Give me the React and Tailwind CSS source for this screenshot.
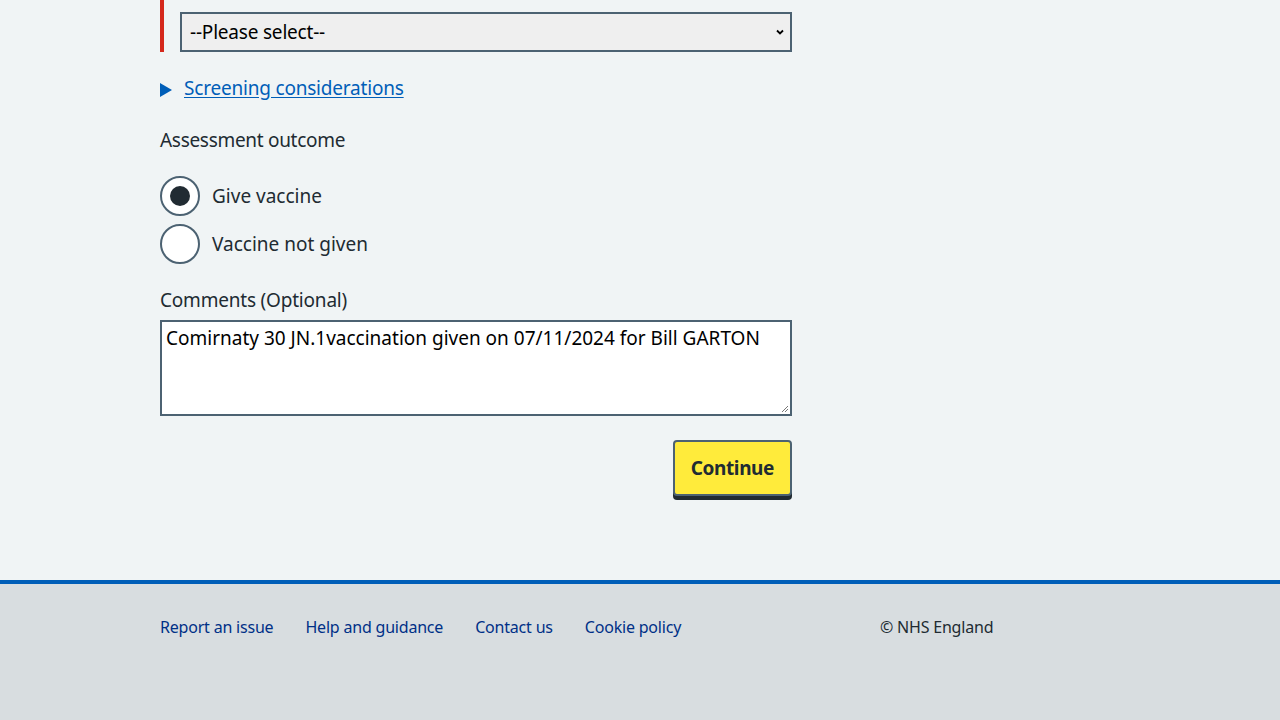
export default function App() {
  const font = { fontFamily: '"Noto Sans", "Open Sans", sans-serif' };
  return (
    <div className="w-[1280px] h-[720px] bg-[#f0f4f5] flex flex-col text-[#212b32]" style={font}>
      <main className="h-[580px] pl-[160px]">
        <div className="w-[632px] flex flex-col">
          <div className="border-l-4 border-[#d5281b] pl-4 pt-3 h-[52px]">
            <div className="h-10 border-2 border-[#4c6272] bg-[#efefef] flex items-center justify-between pl-2 pr-1.5">
              <span className="text-[19px] text-black tracking-[-0.2px]">--Please select--</span>
              <svg width="8" height="6" viewBox="0 0 8 6"><path d="M1 1.5 L4 4.5 L7 1.5" stroke="black" strokeWidth="1.8" fill="none" /></svg>
            </div>
          </div>
          <div className="mt-[26px] flex items-center h-[20px]">
            <svg width="12" height="14" viewBox="0 0 12 14" className="mt-[3px]"><path d="M0 0 L12 7 L0 14 Z" fill="#005eb8" /></svg>
            <span className="ml-3 text-[19px] text-[#005eb8] underline underline-offset-2 tracking-[-0.2px]">Screening considerations</span>
          </div>
          <div className="mt-[30px] text-[19px] leading-[24px] h-[24px] tracking-[-0.3px]">Assessment outcome</div>
          <div className="mt-[24px] flex flex-col gap-2">
            <div className="flex items-center gap-3">
              <div className="w-10 h-10 rounded-full border-2 border-[#4c6272] bg-white flex items-center justify-center">
                <div className="w-5 h-5 rounded-full bg-[#212b32]" />
              </div>
              <span className="text-[19px]">Give vaccine</span>
            </div>
            <div className="flex items-center gap-3">
              <div className="w-10 h-10 rounded-full border-2 border-[#4c6272] bg-white" />
              <span className="text-[19px]">Vaccine not given</span>
            </div>
          </div>
          <div className="mt-[24px] text-[19px] leading-[24px] h-[24px] tracking-[-0.2px]">Comments (Optional)</div>
          <div className="mt-[8px] h-[96px] border-2 border-[#4c6272] bg-white px-1 pt-[2px] relative">
            <span className="text-[19px] text-black">Comirnaty 30 JN.1vaccination given on 07/11/2024 for Bill GARTON</span>
            <svg className="absolute right-[1px] bottom-[1px]" width="8" height="8" viewBox="0 0 8 8"><path d="M7 1 L1 7 M7 4 L4 7" stroke="#777" strokeWidth="1" /></svg>
          </div>
          <div className="mt-6 flex justify-end">
            <div className="h-[56px] px-4 border-2 border-[#4c6272] rounded bg-[#ffeb3b] shadow-[0_4px_0_#212b32] flex items-center text-[19px] font-bold tracking-[-0.4px]">Continue</div>
          </div>
        </div>
      </main>
      <footer className="flex-1 bg-[#d8dde0] border-t-4 border-[#005eb8] pl-[160px] pt-[33px]">
        <div className="flex items-center text-[16px] h-[20px] tracking-[-0.2px]">
          <div className="flex gap-8 text-[#003087] w-[720px]">
            <span>Report an issue</span>
            <span>Help and guidance</span>
            <span>Contact us</span>
            <span>Cookie policy</span>
          </div>
          <span className="text-[#212b32]">© NHS England</span>
        </div>
      </footer>
    </div>
  );
}
